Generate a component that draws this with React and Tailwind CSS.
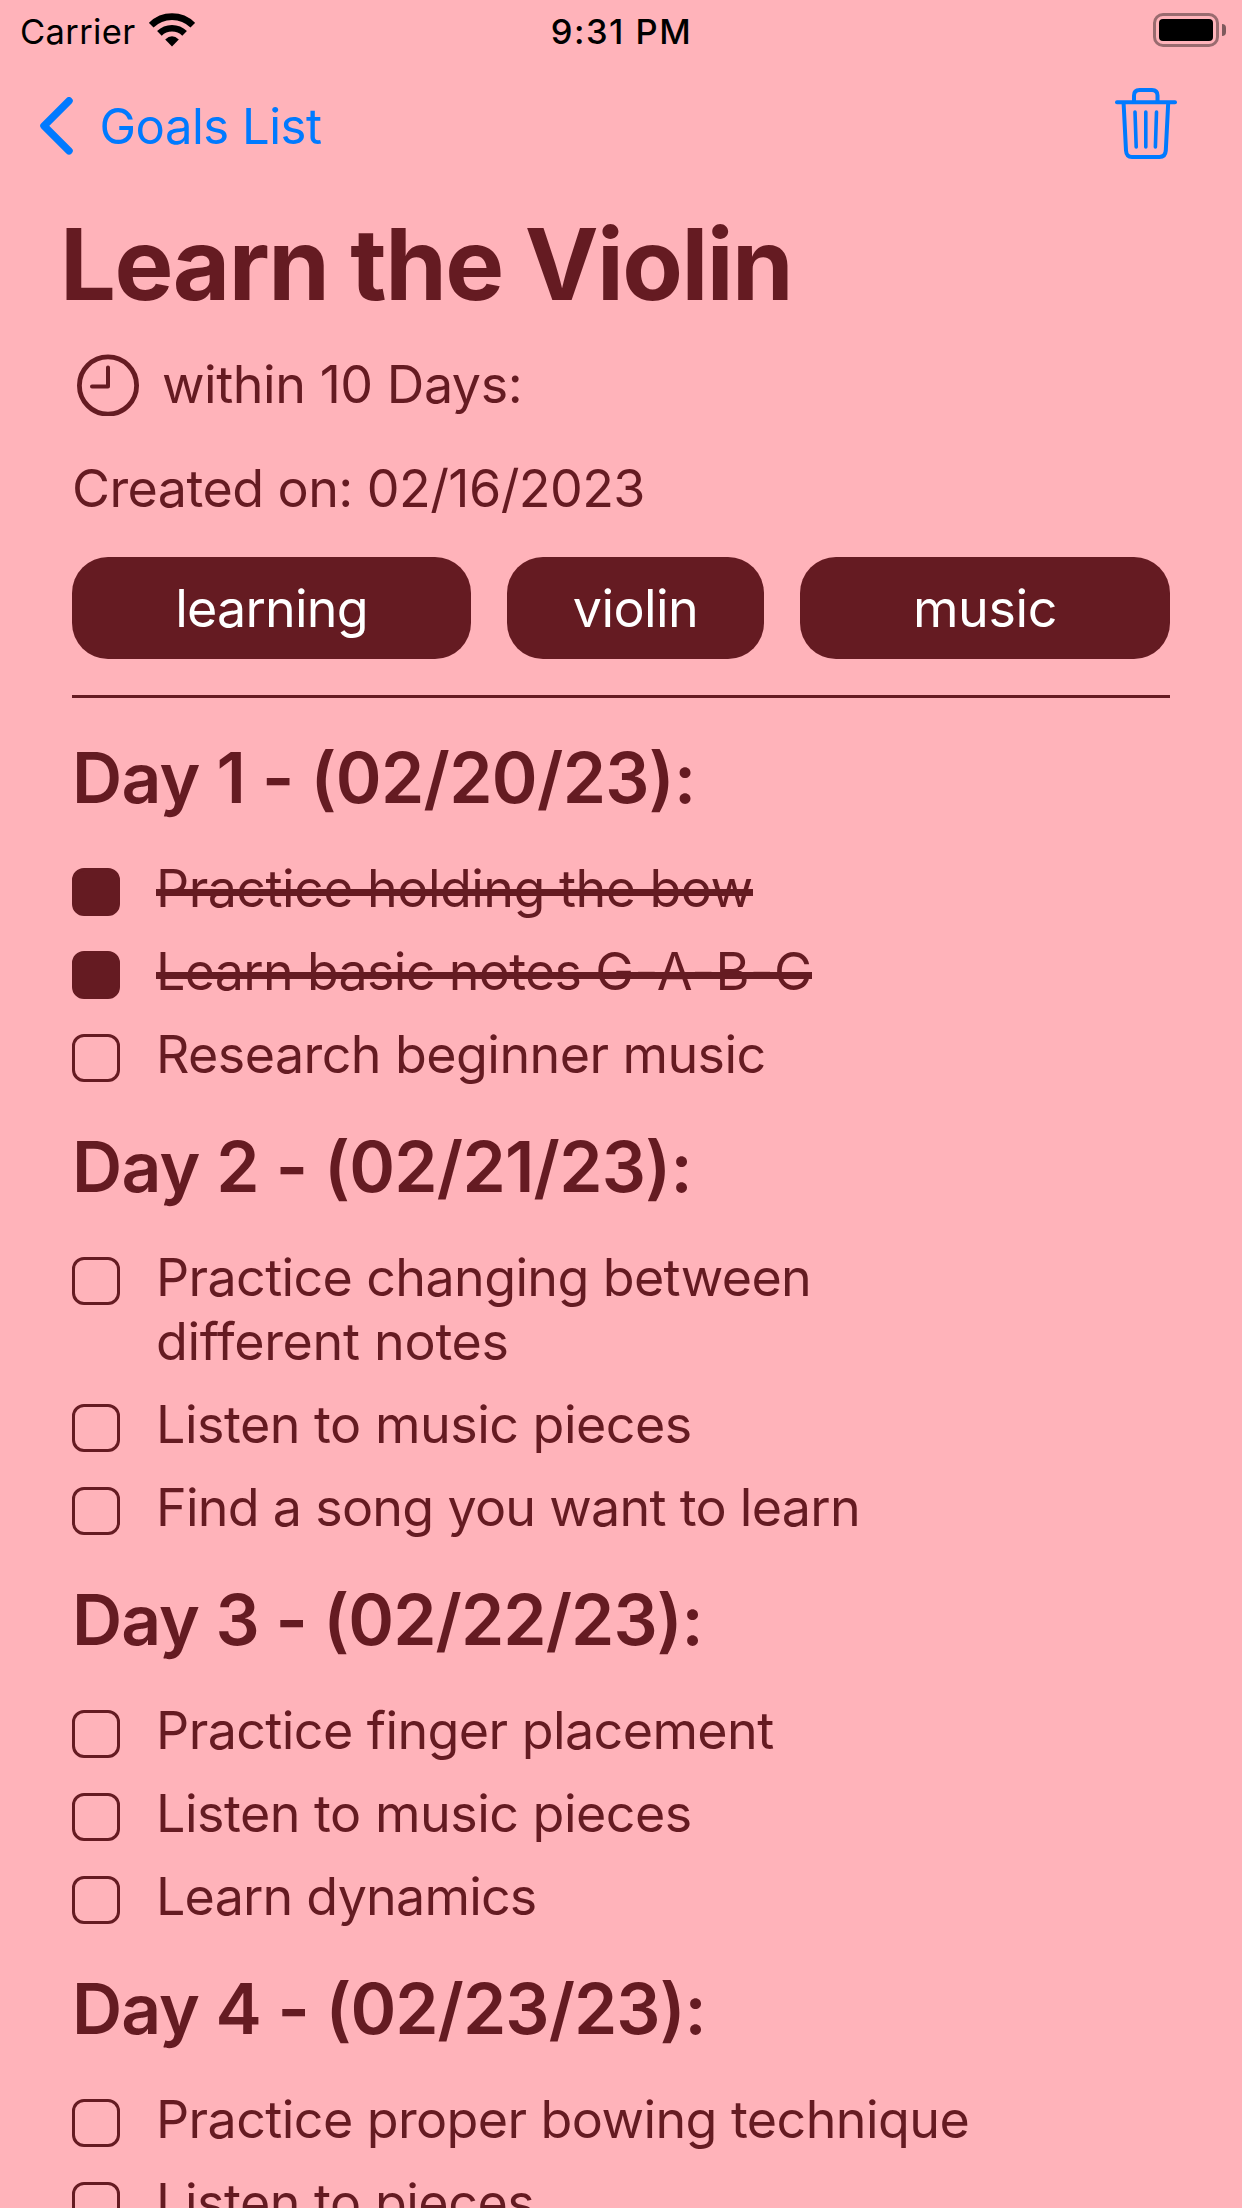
import React from "react";

const tags = [
  { label: "learning", box: "w-[399px] tracking-[-0.8px]" },
  { label: "violin", box: "w-[257px] tracking-[-0.6px]" },
  { label: "music", box: "w-[370px] tracking-[-0.4px]" },
];

const days = [
  {
    title: "Day 1 - (02/20/23):",
    tracking: "tracking-[-0.69px]",
    tasks: [
      { text: "Practice holding the bow", done: true },
      {
        text: (
          <>
            Learn basic notes <span className="tracking-[0.3px]">G-A-B-C</span>
          </>
        ),
        done: true,
        tracking: "tracking-[-0.7px] [font-feature-settings:'calt'_0]",
      },
      { text: "Research beginner music", tracking: "tracking-[-0.58px]" },
    ],
  },
  {
    title: "Day 2 - (02/21/23):",
    tracking: "tracking-[-0.75px]",
    tasks: [
      {
        text: (
          <>
            Practice changing between <span className="tracking-[-0.3px]">different notes</span>
          </>
        ),
        tracking: "tracking-[-0.63px]",
      },
      { text: "Listen to music pieces", tracking: "tracking-[-0.5px]" },
      { text: "Find a song you want to learn", tracking: "tracking-[-0.73px]" },
    ],
  },
  {
    title: "Day 3 - (02/22/23):",
    tracking: "tracking-[-0.95px]",
    tasks: [
      { text: "Practice finger placement", tracking: "tracking-[-0.58px]" },
      { text: "Listen to music pieces", tracking: "tracking-[-0.5px]" },
      { text: "Learn dynamics", tracking: "tracking-[-0.8px]" },
    ],
  },
  {
    title: "Day 4 - (02/23/23):",
    tracking: "tracking-[-0.95px]",
    tasks: [
      { text: "Practice proper bowing technique", wide: true, tracking: "tracking-[-0.59px]" },
      { text: "Listen to pieces", tracking: "tracking-[-0.5px]" },
    ],
  },
];

function WifiIcon() {
  return (
    <svg className="ml-[13px] h-[34px] w-[46px]" viewBox="0 0 46 34" fill="none">
      <path d="M2.2 12.2 A29.5 29.5 0 0 1 43.8 12.2" stroke="#000" strokeWidth="6.6" />
      <path d="M10.4 20.4 A18 18 0 0 1 35.6 20.4" stroke="#000" strokeWidth="6.6" />
      <path d="M16.2 26.6 Q23 20 29.8 26.6 L23 33.4 Z" fill="#000" />
    </svg>
  );
}

function StatusBar() {
  return (
    <div className="grid h-[60px] grid-cols-3 items-center px-[20px] text-[34.5px] leading-[40px] text-black">
      <div className="flex items-center">
        <span className="mt-[3px] tracking-[0.35px]">Carrier</span>
        <WifiIcon />
      </div>
      <div className="mt-[3px] pl-[1px] text-center font-[550] tracking-[1.5px]">9:31 PM</div>
      <div className="mr-[-4px] flex items-center justify-end gap-[3px]">
        <div className="h-[34px] w-[66px] rounded-[10px] border-3 border-black/40 p-[3px]">
          <div className="h-full rounded-[4px] bg-black" />
        </div>
        <div className="h-[12px] w-[4px] rounded-r-full bg-black/50" />
      </div>
    </div>
  );
}

function TrashIcon() {
  return (
    <svg
      className="h-[72px] w-[62px]"
      viewBox="0 0 62 72"
      fill="none"
      stroke="#007aff"
      strokeWidth="4"
      strokeLinecap="round"
      strokeLinejoin="round"
    >
      <path d="M2 14.3H60" />
      <path d="M19 14V7.5Q19 2 24.5 2H37Q42.5 2 42.5 7.5V14" />
      <path d="M8.6 15L11 62.5Q11.4 69 17 69H44.5Q50.3 69 50.8 62.5L53.2 15" />
      <path d="M20 24L21.2 59M30.8 24V59M41.5 24L40.4 59" strokeWidth="3.6" />
    </svg>
  );
}

function NavBar() {
  return (
    <div className="flex h-[128px] items-center justify-between pr-[65px] pl-[39px] text-[#007aff]">
      <div className="mt-[3px] flex items-center">
        <svg
          className="h-[58px] w-[36px]"
          viewBox="0 0 36 58"
          fill="none"
          stroke="#007aff"
          strokeWidth="7.5"
          strokeLinecap="round"
          strokeLinejoin="round"
        >
          <path d="M30 3.8L5 28.8L30 53.8" />
        </svg>
        <span className="mt-[2px] ml-[24.5px] text-[49px] leading-[60px] tracking-[-0.5px]">
          Goals List
        </span>
      </div>
      <TrashIcon />
    </div>
  );
}

function ClockIcon() {
  return (
    <svg
      className="h-[64px] w-[64px]"
      viewBox="0 0 64 64"
      fill="none"
      stroke="#651b22"
      strokeLinecap="round"
      strokeLinejoin="round"
    >
      <circle cx="32" cy="33.5" r="28.6" strokeWidth="4.8" />
      <path d="M32 15.5V34.5H16" strokeWidth="4" />
    </svg>
  );
}

function Task({ text, done, wide, tracking }) {
  return (
    <li className="flex items-start gap-[36px]">
      <span
        className={
          "mt-[12px] h-[48px] w-[48px] shrink-0 rounded-[12px] border-3 border-[#651b22] " +
          (done ? "bg-[#651b22]" : "")
        }
      />
      <span
        className={
          "relative mt-[1px] mb-[-1px] text-[52px] leading-[64px] " +
          (wide ? "max-w-[900px] " : "max-w-[760px] ") +
          (tracking || "tracking-[-0.54px]")
        }
      >
        {text}
        {done && <span className="absolute inset-x-0 top-[32px] h-[7px] bg-[#651b22]" />}
      </span>
    </li>
  );
}

export default function App() {
  return (
    <div className="h-[2208px] w-[1242px] overflow-hidden bg-[#ffb3ba] font-['Inter',sans-serif] text-[#651b22]">
      <StatusBar />
      <NavBar />
      <main>
        <h1 className="mt-[16px] pl-[60px] text-[99px] leading-[120px] font-bold tracking-[-1.54px]">
          Learn the Violin
        </h1>
        <div className="px-[72px]">
          <div className="mt-[28px] flex items-center gap-[22px] pl-[4px] text-[52px] leading-[64px] tracking-[-0.46px]">
            <ClockIcon />
            <span className="mt-[1px] mb-[-1px]">within 10 Days:</span>
          </div>
          <div className="mt-[41px] text-[52px] leading-[64px] tracking-[-0.56px]">
            Created on: 02/16/2023
          </div>
          <div className="mt-[36px] flex gap-[36px]">
            {tags.map((tag) => (
              <div
                key={tag.label}
                className={
                  "flex h-[102px] items-center justify-center rounded-[36px] bg-[#651b22] pt-[1px] text-[52px] leading-[64px] text-white " +
                  tag.box
                }
              >
                {tag.label}
              </div>
            ))}
          </div>
          <hr className="mt-[36px] h-[3px] border-0 bg-[#651b22]" />
          <div className="mt-[38px] flex flex-col gap-[39px]">
            {days.map((day) => (
              <section key={day.title}>
                <h2
                  className={"text-[69.5px] leading-[84px] font-semibold " + day.tracking}
                >
                  {day.title}
                </h2>
                <ul className="mt-[36px] flex flex-col gap-[19px]">
                  {day.tasks.map((task, i) => (
                    <Task key={i} {...task} />
                  ))}
                </ul>
              </section>
            ))}
          </div>
        </div>
      </main>
    </div>
  );
}
